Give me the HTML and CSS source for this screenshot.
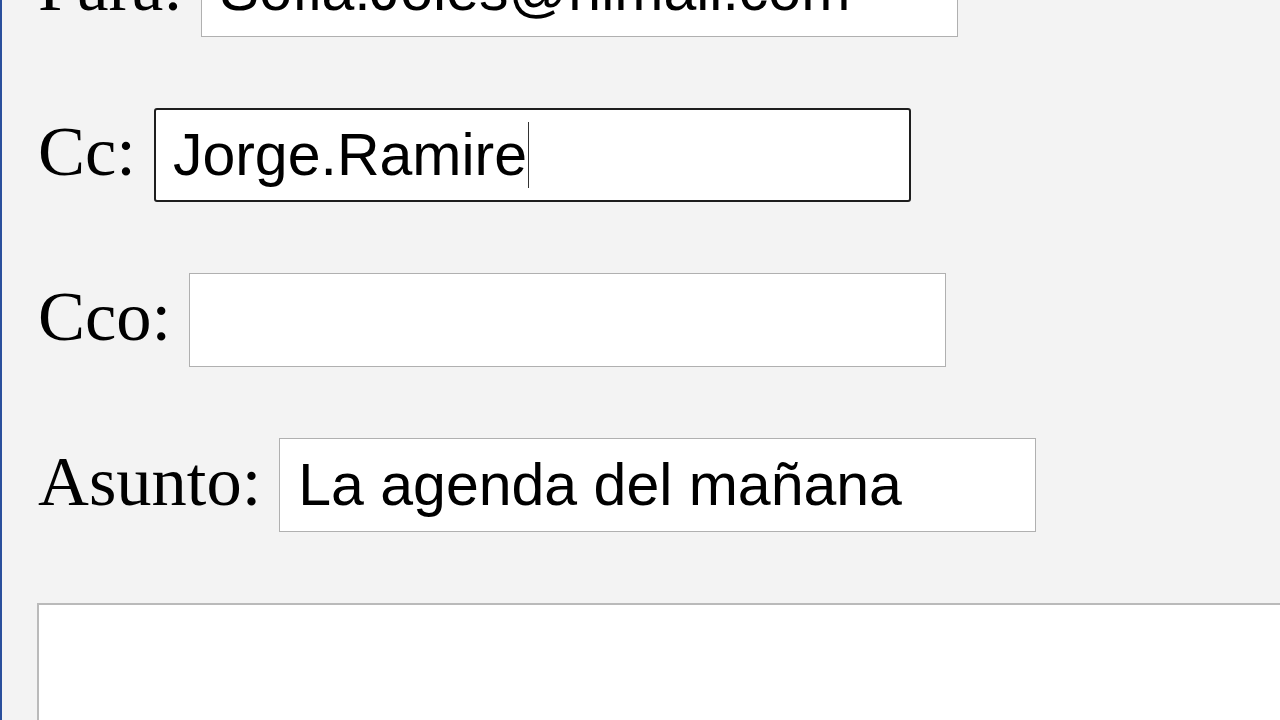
FILE: index.html
```html
<!DOCTYPE html>
<html lang="es">
<head>
    <meta charset="UTF-8">
    <meta name="viewport" content="width=device-width, initial-scale=1.0">
    <title>Nuevo mensaje</title>
    <link rel="stylesheet" href="styles.css">
</head>
<body>
    <form class="mail-form">
        <div class="field-row">
            <label for="para">Para:</label>
            <input type="text" id="para" class="field" value="Sofia.Joles@hlmail.com">
        </div>

        <div class="field-row">
            <label for="cc">Cc:</label>
            <span class="field-wrap">
                <input type="text" id="cc" class="field field-active" value="Jorge.Ramire">
                <span class="caret"></span>
            </span>
        </div>

        <div class="field-row">
            <label for="cco">Cco:</label>
            <input type="text" id="cco" class="field" value="">
        </div>

        <div class="field-row">
            <label for="asunto">Asunto:</label>
            <input type="text" id="asunto" class="field" value="La agenda del mañana">
        </div>

        <textarea class="message" id="mensaje"></textarea>
    </form>
</body>
</html>
```

FILE: styles.css
```css
html, body {
    height: 100%;
}

body {
    margin: 0;
    overflow: hidden;
    background-color: #f3f3f3;
    border-left: 2px solid #2a4f9c; /* window edge */
    color: #000;
}

.mail-form {
    display: flex;
    flex-direction: column;
    gap: 71px;
    margin-top: -57px; /* page is scrolled a little */
    padding-left: 36px;
}

.field-row {
    display: flex;
    align-items: baseline;
    gap: 18px;
}

.field-row label {
    font-family: "Liberation Serif", "Times New Roman", serif;
    font-size: 70.5px;
}

.field-wrap {
    position: relative;
    display: inline-block;
}

.field {
    box-sizing: border-box;
    width: 757px;
    height: 94px;
    margin: 0;
    padding: 0 18px;
    border: 1px solid #b0b0b0;
    border-radius: 0;
    background-color: #fff;
    font-family: "Liberation Sans", Arial, sans-serif;
    font-size: 59px;
    color: #000;
    outline: none;
}

.field-active {
    padding: 0 17px;
    border: 2px solid #1e1e1e;
    border-radius: 3px;
}

/* text cursor after "Jorge.Ramire" */
.caret {
    position: absolute;
    left: 374px;
    top: 14px;
    width: 1.5px;
    height: 66px;
    background-color: #333;
}

.message {
    box-sizing: border-box;
    display: block;
    width: 1300px;
    height: 200px;
    margin: 0 0 0 -1px;
    border: 2px solid #bababa;
    background-color: #fff;
    resize: none;
    outline: none;
}
```
